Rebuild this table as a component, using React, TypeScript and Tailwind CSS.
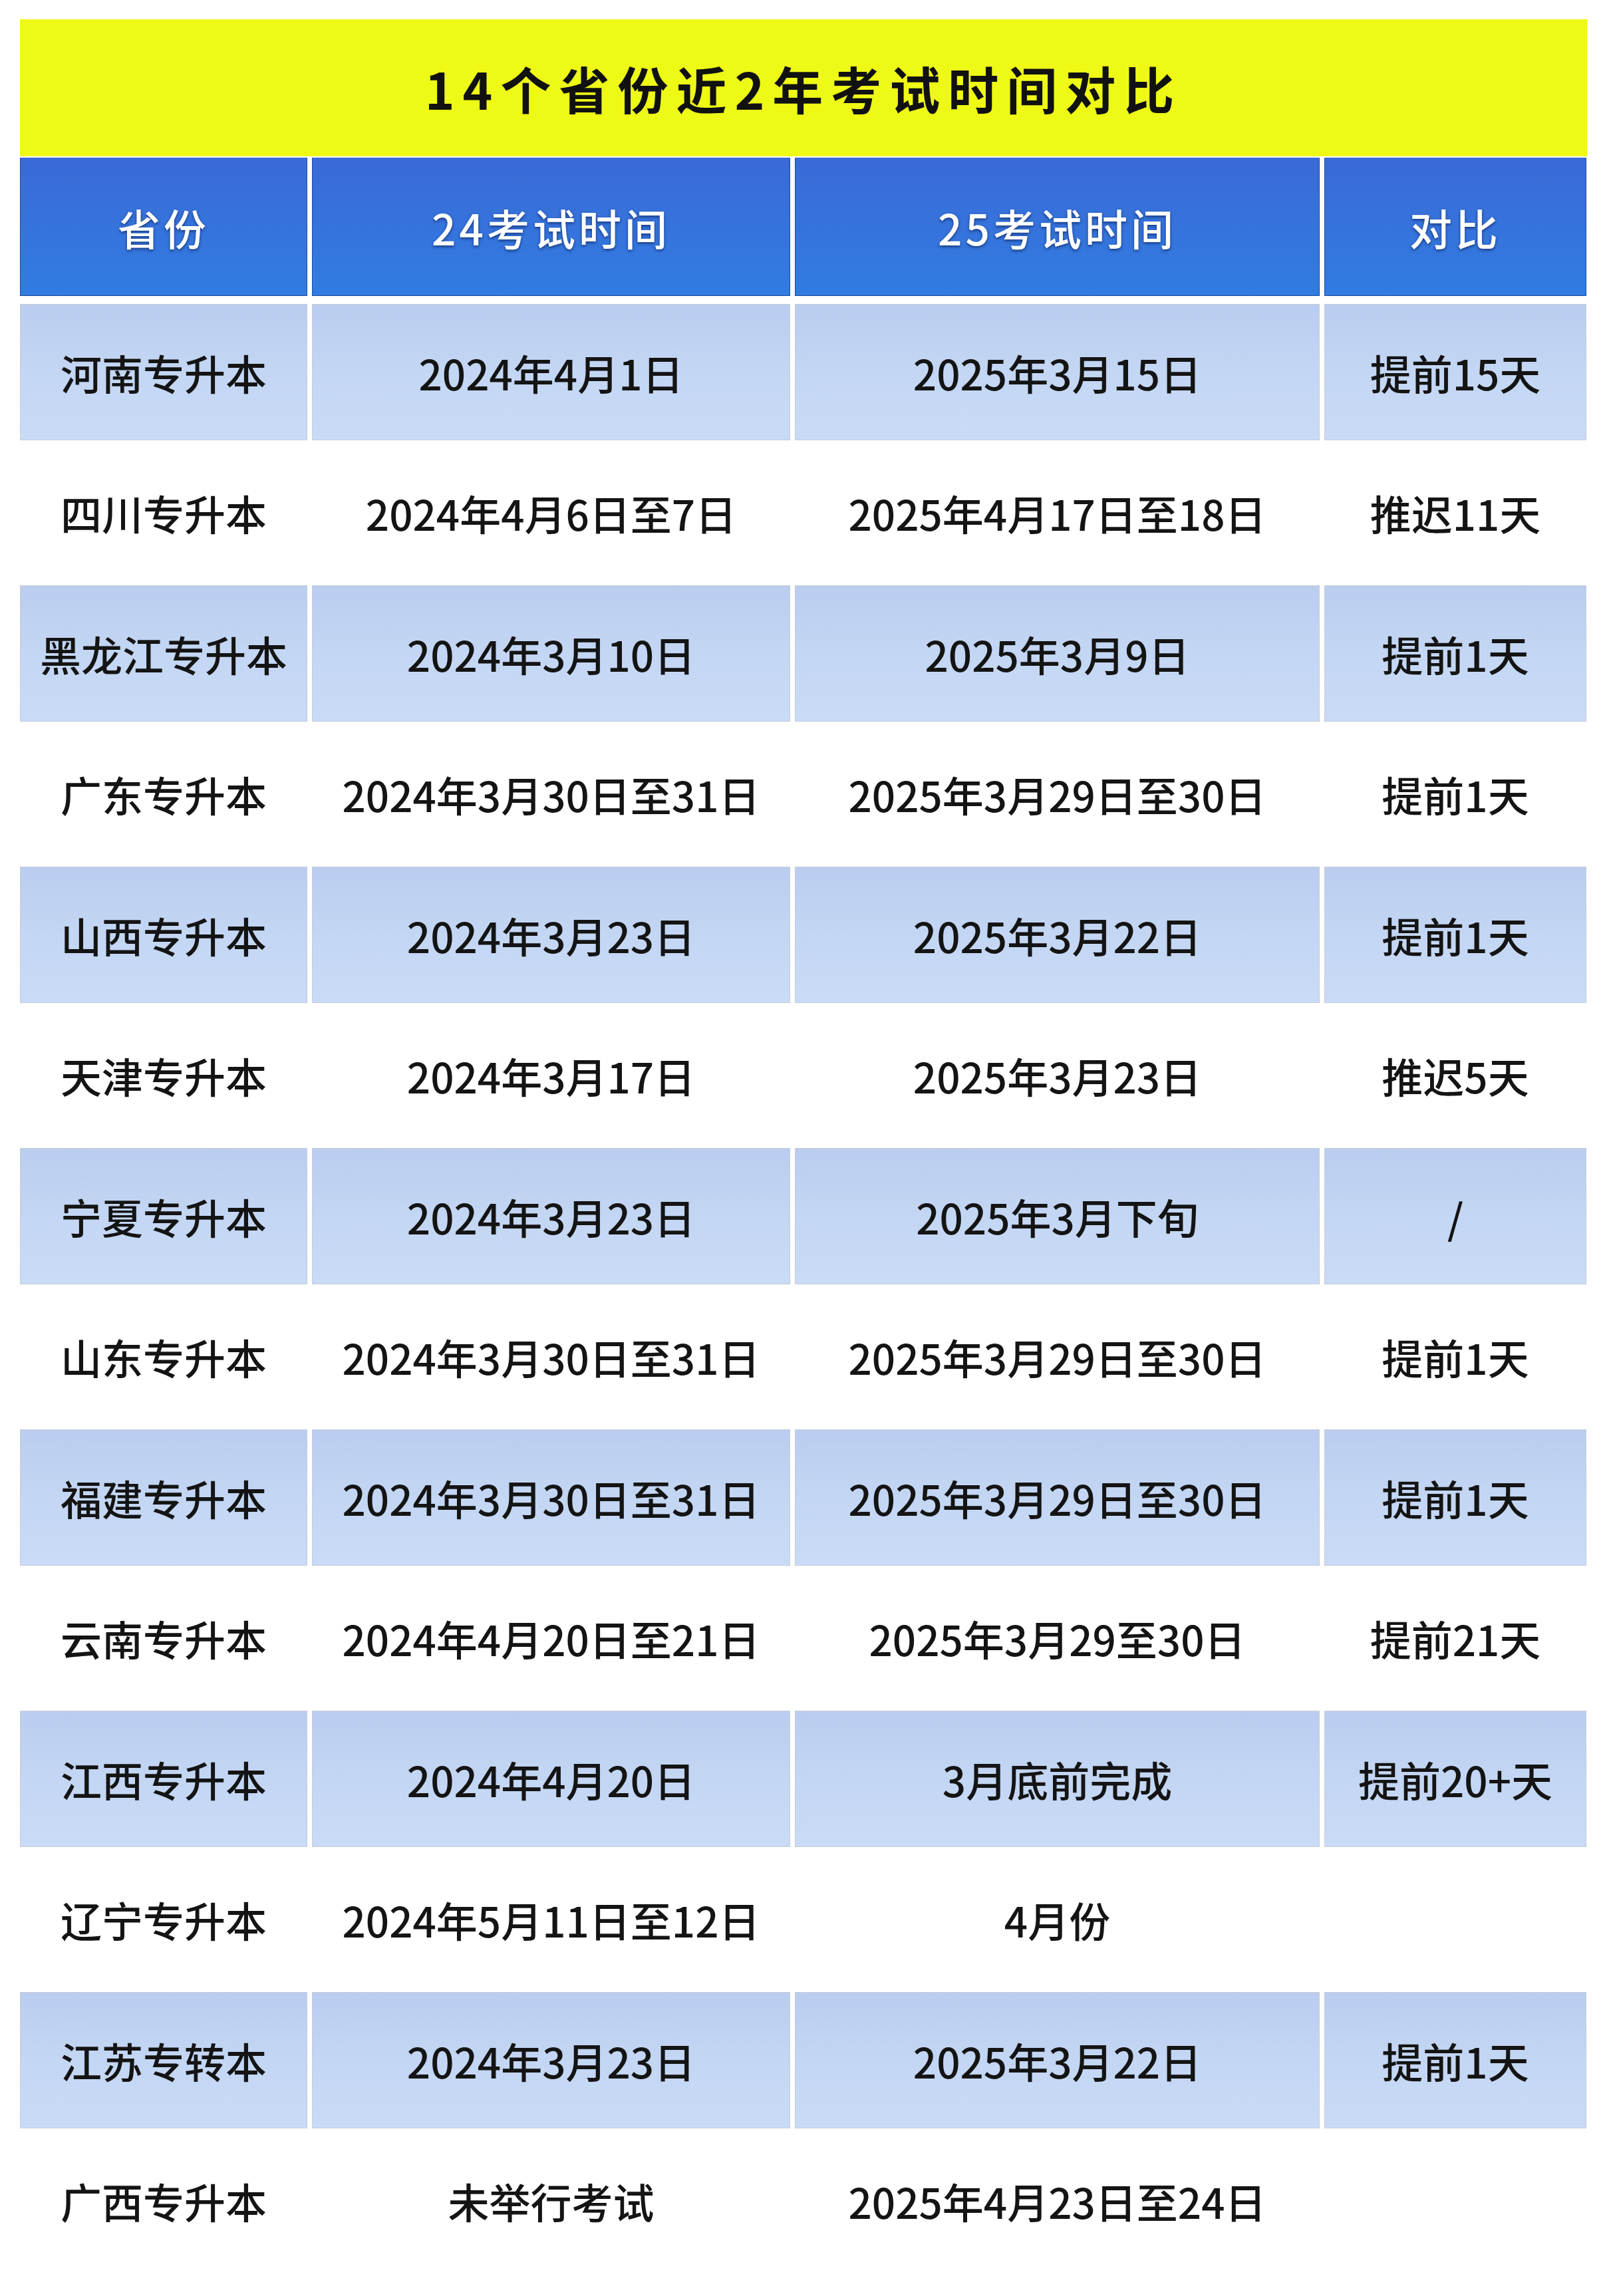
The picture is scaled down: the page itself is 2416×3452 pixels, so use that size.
const rows = [
  ["河南专升本", "2024年4月1日", "2025年3月15日", "提前15天"],
  ["四川专升本", "2024年4月6日至7日", "2025年4月17日至18日", "推迟11天"],
  ["黑龙江专升本", "2024年3月10日", "2025年3月9日", "提前1天"],
  ["广东专升本", "2024年3月30日至31日", "2025年3月29日至30日", "提前1天"],
  ["山西专升本", "2024年3月23日", "2025年3月22日", "提前1天"],
  ["天津专升本", "2024年3月17日", "2025年3月23日", "推迟5天"],
  ["宁夏专升本", "2024年3月23日", "2025年3月下旬", "/"],
  ["山东专升本", "2024年3月30日至31日", "2025年3月29日至30日", "提前1天"],
  ["福建专升本", "2024年3月30日至31日", "2025年3月29日至30日", "提前1天"],
  ["云南专升本", "2024年4月20日至21日", "2025年3月29至30日", "提前21天"],
  ["江西专升本", "2024年4月20日", "3月底前完成", "提前20+天"],
  ["辽宁专升本", "2024年5月11日至12日", "4月份", ""],
  ["江苏专转本", "2024年3月23日", "2025年3月22日", "提前1天"],
  ["广西专升本", "未举行考试", "2025年4月23日至24日", ""],
];

const headers = ["省份", "24考试时间", "25考试时间", "对比"];

export default function App() {
  return (
    <div className="min-h-screen w-[2416px] bg-white pt-[29px] pl-[30px] font-['Noto_Sans_CJK_SC','Noto_Sans',sans-serif]">
      <div className="w-[2356px]">
        {/* Title */}
        <div className="h-[206px] bg-[#eefa16] flex items-center justify-center">
          <h1 className="text-[76px] font-bold tracking-[12px] text-[#111] leading-none">
            14个省份近2年考试时间对比
          </h1>
        </div>

        {/* Header */}
        <div className="mt-[2px] grid grid-cols-[432px_719px_789px_394px] gap-x-[7px]">
          {headers.map((h) => (
            <div
              key={h}
              className="h-[208px] flex items-center justify-center bg-gradient-to-b from-[#3a6ad7] to-[#307ce1] border border-[#22489a] border-t-[#3a6ad7]"
            >
              <span className="text-[64px] font-medium tracking-[5px] text-white leading-none [text-shadow:0_2px_4px_rgba(10,30,80,0.7)]">
                {h}
              </span>
            </div>
          ))}
        </div>

        {/* Body */}
        <div className="mt-[12px] grid grid-cols-[432px_719px_789px_394px] auto-rows-[205px] gap-x-[7px] gap-y-[6.5px]">
          {rows.map((row, i) =>
            row.map((cell, j) => (
              <div
                key={i + "-" + j}
                className={
                  i % 2 === 0
                    ? "flex items-center justify-center bg-gradient-to-b from-[#bacdef] via-[#c3d6f3] to-[#c9dbf6] border border-[#c6ccd8]"
                    : "flex items-center justify-center bg-white"
                }
              >
                <span className="text-[62px] font-medium text-[#141414] leading-none">{cell}</span>
              </div>
            ))
          )}
        </div>
      </div>
    </div>
  );
}
